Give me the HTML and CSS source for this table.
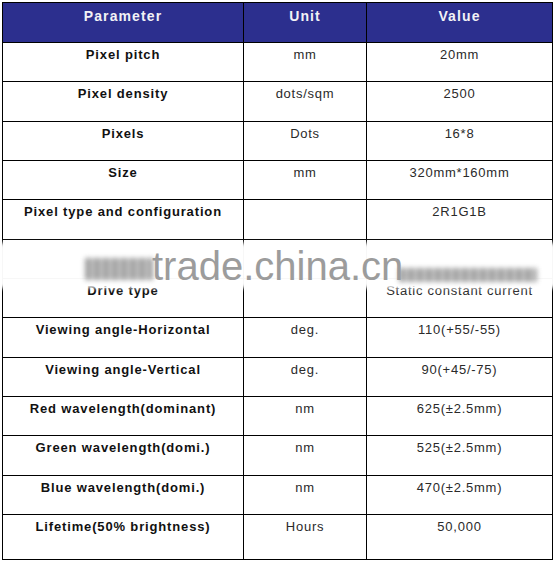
FILE: index.html
```html
<!DOCTYPE html>
<html>
<head>
<meta charset="utf-8">
<link rel="stylesheet" href="styles.css">
</head>
<body>
<div class="wrap">
  <table class="spec">
    <colgroup>
      <col class="c1"><col class="c2"><col class="c3">
    </colgroup>
    <thead>
      <tr class="head"><th>Parameter</th><th>Unit</th><th>Value</th></tr>
    </thead>
    <tbody>
      <tr><td class="p">Pixel pitch</td><td>mm</td><td>20mm</td></tr>
      <tr><td class="p">Pixel density</td><td>dots/sqm</td><td>2500</td></tr>
      <tr><td class="p">Pixels</td><td>Dots</td><td>16*8</td></tr>
      <tr><td class="p">Size</td><td>mm</td><td>320mm*160mm</td></tr>
      <tr><td class="p">Pixel type and configuration</td><td></td><td>2R1G1B</td></tr>
      <tr><td class="p"></td><td></td><td></td></tr>
      <tr><td class="p">Drive type</td><td></td><td>Static constant current</td></tr>
      <tr><td class="p">Viewing angle-Horizontal</td><td>deg.</td><td>110(+55/-55)</td></tr>
      <tr><td class="p">Viewing angle-Vertical</td><td>deg.</td><td>90(+45/-75)</td></tr>
      <tr><td class="p">Red wavelength(dominant)</td><td>nm</td><td>625(±2.5mm)</td></tr>
      <tr><td class="p">Green wavelength(domi.)</td><td>nm</td><td>525(±2.5mm)</td></tr>
      <tr><td class="p">Blue wavelength(domi.)</td><td>nm</td><td>470(±2.5mm)</td></tr>
      <tr class="last"><td class="p">Lifetime(50% brightness)</td><td>Hours</td><td>50,000</td></tr>
    </tbody>
  </table>
  <div class="wm">
    <div class="band"></div>
    <div class="blob blob-l"></div>
    <div class="blob blob-r"></div>
    <div class="wm-text">trade.china.cn</div>
  </div>
</div>
</body>
</html>
```

FILE: styles.css
```css
html, body {
  margin: 0;
  padding: 0;
  background: #ffffff;
}

.wrap {
  position: relative;
  width: 553px;
  height: 561px;
  padding: 2px 0 0 2px;
  box-sizing: border-box;
  overflow: hidden;
}

.spec {
  border-collapse: collapse;
  table-layout: fixed;
  width: 550px;
  font-family: "Liberation Sans", Arial, sans-serif;
}

.c1 { width: 241px; }
.c2 { width: 123px; }
.c3 { width: 186px; }

.spec th,
.spec td {
  border: 1px solid #000;
  text-align: center;
  vertical-align: top;
  padding: 4px 2px 0 2px;
  line-height: 15px;
}

.head {
  height: 40px;
  background: #2c2f8e;
}

.spec th {
  color: #f2f2f6;
  font-weight: bold;
  font-size: 14px;
  letter-spacing: 1.1px;
  padding-top: 6px;
}

.spec tbody tr {
  height: 39.33px;
}

.spec tbody tr.last {
  height: 45px;
}

.spec td {
  font-size: 13px;
  color: #2a2a2a;
  letter-spacing: 0.75px;
}

.spec td.p {
  color: #111;
  font-weight: bold;
  letter-spacing: 0.85px;
}

.wm {
  position: absolute;
  left: 0;
  top: 240px;
  width: 553px;
  height: 52px;
  pointer-events: none;
}

.band {
  position: absolute;
  left: -10px;
  right: -10px;
  top: 3px;
  height: 45px;
  background: rgba(255, 255, 255, 0.97);
  filter: blur(2px);
}

.blob {
  position: absolute;
  filter: blur(2.5px);
  background: repeating-linear-gradient(90deg, #8a8a8a 0 6px, #c0c0c0 6px 9px);
  opacity: 0.8;
}

.blob-l {
  left: 85px;
  top: 18px;
  width: 68px;
  height: 22px;
}

.blob-r {
  left: 399px;
  top: 28px;
  width: 138px;
  height: 14px;
}

.wm-text {
  position: absolute;
  left: 152px;
  top: 3px;
  font-family: "Liberation Sans", Arial, sans-serif;
  font-size: 40px;
  line-height: 46px;
  color: #9c9c9c;
  white-space: nowrap;
}
```
